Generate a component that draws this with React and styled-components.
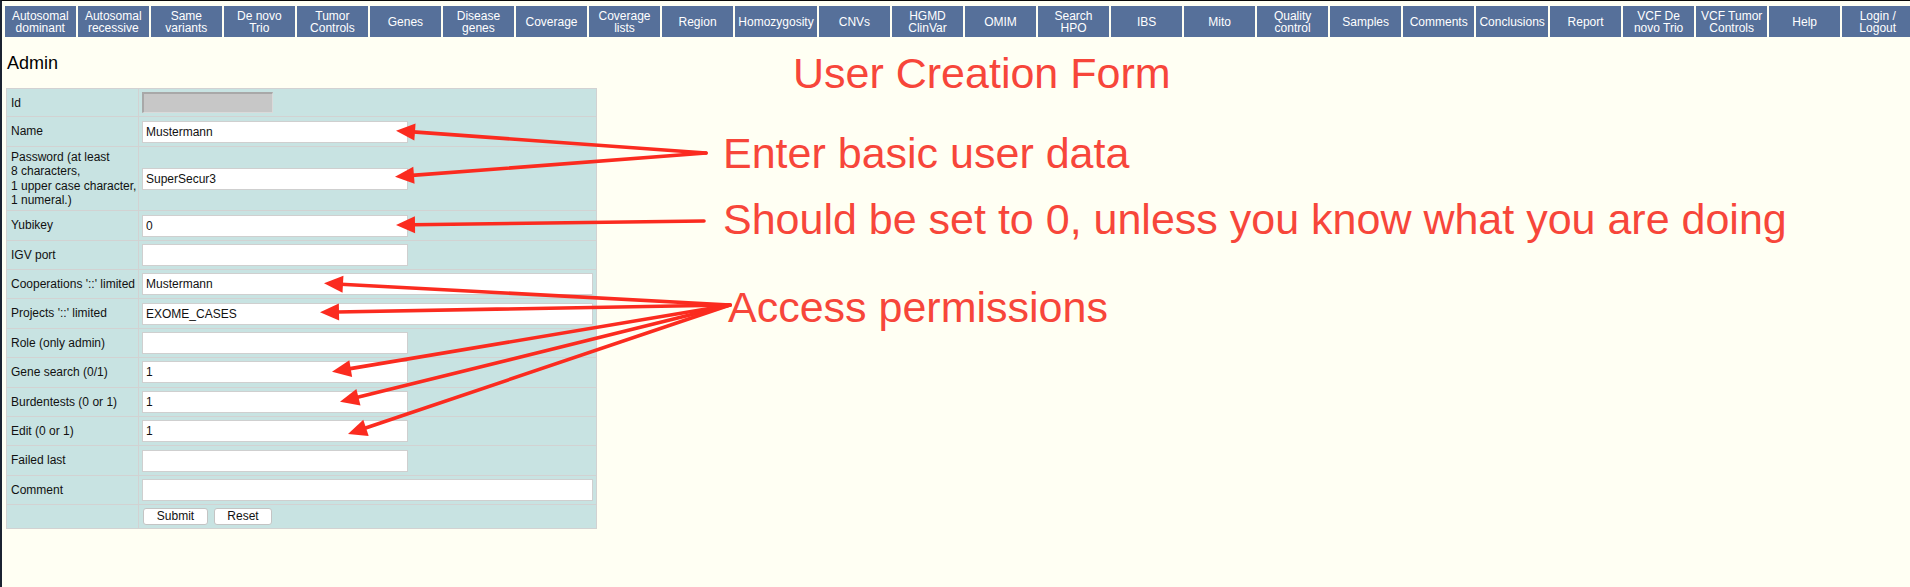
import React from "react";
import styled, { createGlobalStyle } from "styled-components";

const GlobalStyle = createGlobalStyle`
  html, body {
    margin: 0;
    padding: 0;
    overflow: hidden;
    background: #fffff3;
    font-family: "Liberation Sans", Arial, Helvetica, sans-serif;
  }
`;

const Page = styled.div`
  position: relative;
  width: 1910px;
  height: 587px;
  box-sizing: border-box;
  border-top: 1px solid #0a0a0a;
  border-left: 2px solid #1b2331;
  background: #fffff3;
  overflow: hidden;
`;

const NavBar = styled.nav`
  display: flex;
  gap: 2.5px;
  width: 1908px;
  margin: 5px 0 0 3px;
`;

const NavButton = styled.a`
  flex: 1 1 0;
  height: 31px;
  padding: 0 3px;
  display: flex;
  align-items: center;
  justify-content: center;
  text-align: center;
  white-space: pre-line;
  background: #56709a;
  color: #ffffff;
  font-size: 12px;
  line-height: 12px;
  text-decoration: none;
`;

const Main = styled.main`
  padding: 0 0 0 4px;
`;

const Title = styled.h1`
  margin: 16px 0 14px 1px;
  font-size: 18px;
  font-weight: normal;
  line-height: 21px;
  color: #000;
`;

const FormTable = styled.table`
  width: 591px;
  table-layout: fixed;
  border-collapse: collapse;
  background: #c8e3e2;
  border: 1px solid #cfcfcf;
  font-size: 12px;
  color: #111;
`;

const LabelCol = styled.col`
  width: 132px;
`;

const LabelCell = styled.td`
  padding: 3.2px 0 3.2px 4px;
  border: 1px solid #d2d2d2;
  white-space: pre;
  overflow: visible;
  line-height: 14.3px;
  vertical-align: middle;
`;

const FieldCell = styled.td`
  padding: 3.2px 4px 3.2px 3px;
  border: 1px solid #d2d2d2;
  vertical-align: middle;
`;

const TextInput = styled.input`
  display: block;
  box-sizing: border-box;
  width: ${(p) => (p.$wide ? "451px" : "266px")};
  height: 22px;
  margin: 0;
  padding: 0 3px;
  border: 1px solid #cfcfcf;
  background: #ffffff;
  font-family: "Liberation Sans", Arial, sans-serif;
  font-size: 12px;
  color: #111;
  outline: none;
`;

const IdInput = styled.input`
  display: block;
  box-sizing: border-box;
  width: 131px;
  height: 21px;
  margin: 0;
  padding: 0 3px;
  border-top: 2px solid #a8a8a8;
  border-left: 2px solid #a8a8a8;
  border-right: 1px solid #dadada;
  border-bottom: 1px solid #dadada;
  background: #c7c7c7;
  outline: none;
`;

const ButtonRow = styled.div`
  display: flex;
  gap: 6px;
  padding-left: 1px;
`;

const FormButton = styled.button`
  height: 17px;
  padding: 0 12px;
  min-width: ${(p) => p.$min}px;
  background: #ffffff;
  border: 1px solid #c4c4c4;
  border-radius: 3px;
  font-family: "Liberation Sans", Arial, sans-serif;
  font-size: 12px;
  line-height: 15px;
  color: #111;
`;

const Note = styled.div`
  position: absolute;
  left: ${(p) => p.$x}px;
  top: ${(p) => p.$y}px;
  font-size: 43px;
  line-height: 43px;
  color: #f7463a;
  white-space: nowrap;
  pointer-events: none;
`;

const ArrowLayer = styled.svg`
  position: absolute;
  left: -2px;
  top: -1px;
  width: 1910px;
  height: 587px;
  pointer-events: none;
`;

const navItems = [
  "Autosomal\ndominant",
  "Autosomal\nrecessive",
  "Same\nvariants",
  "De novo\nTrio",
  "Tumor\nControls",
  "Genes",
  "Disease\ngenes",
  "Coverage",
  "Coverage\nlists",
  "Region",
  "Homozygosity",
  "CNVs",
  "HGMD\nClinVar",
  "OMIM",
  "Search\nHPO",
  "IBS",
  "Mito",
  "Quality\ncontrol",
  "Samples",
  "Comments",
  "Conclusions",
  "Report",
  "VCF De\nnovo Trio",
  "VCF Tumor\nControls",
  "Help",
  "Login /\nLogout",
];

const fields = [
  { label: "Id", kind: "id" },
  { label: "Name", value: "Mustermann" },
  {
    label:
      "Password (at least\n8 characters,\n1 upper case character,\n1 numeral.)",
    value: "SuperSecur3",
  },
  { label: "Yubikey", value: "0" },
  { label: "IGV port", value: "" },
  { label: "Cooperations '::' limited", value: "Mustermann", wide: true },
  { label: "Projects '::' limited", value: "EXOME_CASES", wide: true },
  { label: "Role (only admin)", value: "" },
  { label: "Gene search (0/1)", value: "1" },
  { label: "Burdentests (0 or 1)", value: "1" },
  { label: "Edit (0 or 1)", value: "1" },
  { label: "Failed last", value: "" },
  { label: "Comment", value: "", wide: true },
];

const arrows = [
  [706, 153, 396, 130.7],
  [706, 153, 395, 176.7],
  [704, 221, 396, 225],
  [730, 305, 324, 283.3],
  [730, 305, 320, 312.3],
  [730, 305, 332, 371.7],
  [730, 305, 340, 401.7],
  [730, 305, 348, 434],
];

function Arrow({ x1, y1, x2, y2 }) {
  const dx = x2 - x1;
  const dy = y2 - y1;
  const len = Math.hypot(dx, dy);
  const ux = dx / len;
  const uy = dy / len;
  const L = 19;
  const W = 8.5;
  const bx = x2 - ux * L;
  const by = y2 - uy * L;
  const pts = `${x2},${y2} ${bx - uy * W},${by + ux * W} ${bx + uy * W},${by - ux * W}`;
  return (
    <g>
      <line
        x1={x1}
        y1={y1}
        x2={bx + ux * 2}
        y2={by + uy * 2}
        stroke="#fb2b1f"
        strokeWidth="3.6"
        strokeLinecap="round"
      />
      <polygon points={pts} fill="#fb2b1f" />
    </g>
  );
}

export default function App() {
  return (
    <>
      <GlobalStyle />
      <Page>
        <NavBar>
          {navItems.map((item) => (
            <NavButton key={item} href="#">
              {item}
            </NavButton>
          ))}
        </NavBar>
        <Main>
          <Title>Admin</Title>
          <form onSubmit={(e) => e.preventDefault()}>
            <FormTable>
              <colgroup>
                <LabelCol />
                <col />
              </colgroup>
              <tbody>
                {fields.map((f) => (
                  <tr key={f.label}>
                    <LabelCell>{f.label}</LabelCell>
                    <FieldCell>
                      {f.kind === "id" ? (
                        <IdInput disabled />
                      ) : (
                        <TextInput
                          type="text"
                          $wide={f.wide}
                          defaultValue={f.value || ""}
                        />
                      )}
                    </FieldCell>
                  </tr>
                ))}
                <tr>
                  <LabelCell />
                  <FieldCell>
                    <ButtonRow>
                      <FormButton type="submit" $min={65}>
                        Submit
                      </FormButton>
                      <FormButton type="reset" $min={58}>
                        Reset
                      </FormButton>
                    </ButtonRow>
                  </FieldCell>
                </tr>
              </tbody>
            </FormTable>
          </form>
        </Main>

        <Note $x={791} $y={51}>User Creation Form</Note>
        <Note $x={721} $y={131}>Enter basic user data</Note>
        <Note $x={721} $y={197}>
          Should be set to 0, unless you know what you are doing
        </Note>
        <Note $x={726} $y={285}>Access permissions</Note>

        <ArrowLayer viewBox="0 0 1910 587">
          {arrows.map(([x1, y1, x2, y2], i) => (
            <Arrow key={i} x1={x1} y1={y1} x2={x2} y2={y2} />
          ))}
        </ArrowLayer>
      </Page>
    </>
  );
}
